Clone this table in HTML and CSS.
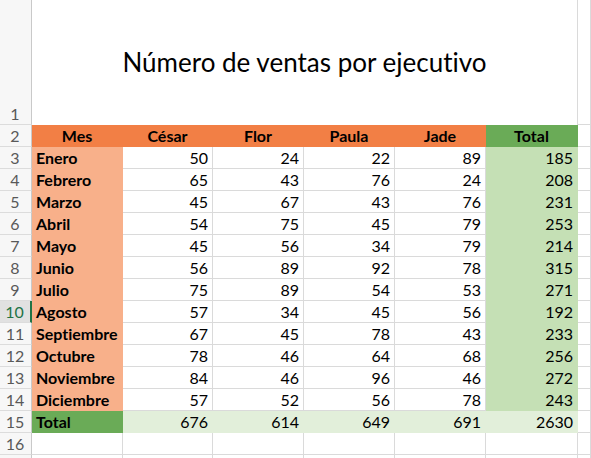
FILE: index.html
```html
<!DOCTYPE html>
<html lang="es">
<head>
<meta charset="utf-8">
<title>Número de ventas por ejecutivo</title>
<link rel="stylesheet" href="styles.css">
</head>
<body>
<div class="sheet">
  <div class="rh">1</div>
  <div class="title">Número de ventas por ejecutivo</div>
  <div class="c"></div>

  <div class="rh">2</div>
  <div class="c hd ctr">Mes</div><div class="c hd ctr">César</div><div class="c hd ctr">Flor</div><div class="c hd ctr">Paula</div><div class="c hd ctr">Jade</div><div class="c hdg ctr">Total</div><div class="c"></div>

  <div class="rh">3</div>
  <div class="c mes">Enero</div><div class="c n">50</div><div class="c n">24</div><div class="c n">22</div><div class="c n">89</div><div class="c n tot">185</div><div class="c"></div>
  <div class="rh">4</div>
  <div class="c mes">Febrero</div><div class="c n">65</div><div class="c n">43</div><div class="c n">76</div><div class="c n">24</div><div class="c n tot">208</div><div class="c"></div>
  <div class="rh">5</div>
  <div class="c mes">Marzo</div><div class="c n">45</div><div class="c n">67</div><div class="c n">43</div><div class="c n">76</div><div class="c n tot">231</div><div class="c"></div>
  <div class="rh">6</div>
  <div class="c mes">Abril</div><div class="c n">54</div><div class="c n">75</div><div class="c n">45</div><div class="c n">79</div><div class="c n tot">253</div><div class="c"></div>
  <div class="rh">7</div>
  <div class="c mes">Mayo</div><div class="c n">45</div><div class="c n">56</div><div class="c n">34</div><div class="c n">79</div><div class="c n tot">214</div><div class="c"></div>
  <div class="rh">8</div>
  <div class="c mes">Junio</div><div class="c n">56</div><div class="c n">89</div><div class="c n">92</div><div class="c n">78</div><div class="c n tot">315</div><div class="c"></div>
  <div class="rh">9</div>
  <div class="c mes">Julio</div><div class="c n">75</div><div class="c n">89</div><div class="c n">54</div><div class="c n">53</div><div class="c n tot">271</div><div class="c"></div>
  <div class="rh sel">10</div>
  <div class="c mes">Agosto</div><div class="c n">57</div><div class="c n">34</div><div class="c n">45</div><div class="c n">56</div><div class="c n tot">192</div><div class="c"></div>
  <div class="rh">11</div>
  <div class="c mes">Septiembre</div><div class="c n">67</div><div class="c n">45</div><div class="c n">78</div><div class="c n">43</div><div class="c n tot">233</div><div class="c"></div>
  <div class="rh">12</div>
  <div class="c mes">Octubre</div><div class="c n">78</div><div class="c n">46</div><div class="c n">64</div><div class="c n">68</div><div class="c n tot">256</div><div class="c"></div>
  <div class="rh">13</div>
  <div class="c mes">Noviembre</div><div class="c n">84</div><div class="c n">46</div><div class="c n">96</div><div class="c n">46</div><div class="c n tot">272</div><div class="c"></div>
  <div class="rh">14</div>
  <div class="c mes">Diciembre</div><div class="c n">57</div><div class="c n">52</div><div class="c n">56</div><div class="c n">78</div><div class="c n tot">243</div><div class="c"></div>

  <div class="rh">15</div>
  <div class="c totlab">Total</div><div class="c n trow">676</div><div class="c n trow">614</div><div class="c n trow">649</div><div class="c n trow">691</div><div class="c n trow">2630</div><div class="c"></div>

  <div class="rh">16</div>
  <div class="c"></div><div class="c"></div><div class="c"></div><div class="c"></div><div class="c"></div><div class="c"></div><div class="c"></div>

  <div class="rh"></div>
  <div class="c"></div><div class="c"></div><div class="c"></div><div class="c"></div><div class="c"></div><div class="c"></div><div class="c"></div>
</div>
</body>
</html>
```

FILE: styles.css
```css
html, body {
  margin: 0;
  padding: 0;
  background: #ffffff;
}

body {
  width: 591px;
  height: 458px;
  overflow: hidden;
  font-family: "Lato", "Liberation Sans", sans-serif;
  font-variant-ligatures: none;
  color: #000;
}

.sheet {
  display: grid;
  grid-template-columns: 32px 91px 90px 91px 91px 91px 92px 1fr;
  grid-template-rows: 125px repeat(16, 22px) 1fr;
  height: 458px;
}

.rh {
  box-sizing: border-box;
  background: #f7f7f7;
  border-right: 1px solid #c9c9c9;
  border-bottom: 1px solid #dcdcdc;
  color: #595959;
  font-size: 16px;
  display: flex;
  align-items: flex-end;
  justify-content: center;
  padding-bottom: 1px;
  padding-right: 1px;
}

.rh.sel {
  background: #e1e1e1;
  color: #217346;
  border-right: 2px solid #217346;
}

.title {
  grid-column: 2 / 8;
  box-sizing: border-box;
  border-right: 1px solid #dadada;
  display: flex;
  align-items: center;
  justify-content: center;
  font-size: 26px;
  padding-bottom: 1px;
}

.c {
  box-sizing: border-box;
  border-right: 1px solid #dadada;
  border-bottom: 1px solid #dadada;
  font-size: 16px;
  display: flex;
  align-items: flex-end;
  padding: 0 4px 1px 4px;
  white-space: nowrap;
  overflow: hidden;
}

.n {
  justify-content: flex-end;
}

.ctr {
  justify-content: center;
}

.hd {
  background: #f27f45;
  border-color: #f27f45;
  font-weight: 700;
}

.hdg {
  background: #6aab57;
  border-color: #6aab57;
  font-weight: 700;
}

.mes {
  background: #f8b08a;
  border-color: #f8b08a;
  font-weight: 700;
}

.tot {
  background: #c5e0b5;
  border-color: #c5e0b5;
}

.totlab {
  background: #6aab57;
  border-color: #6aab57;
  font-weight: 700;
}

.trow {
  background: #e2efda;
  border-color: #e2efda;
}
```
